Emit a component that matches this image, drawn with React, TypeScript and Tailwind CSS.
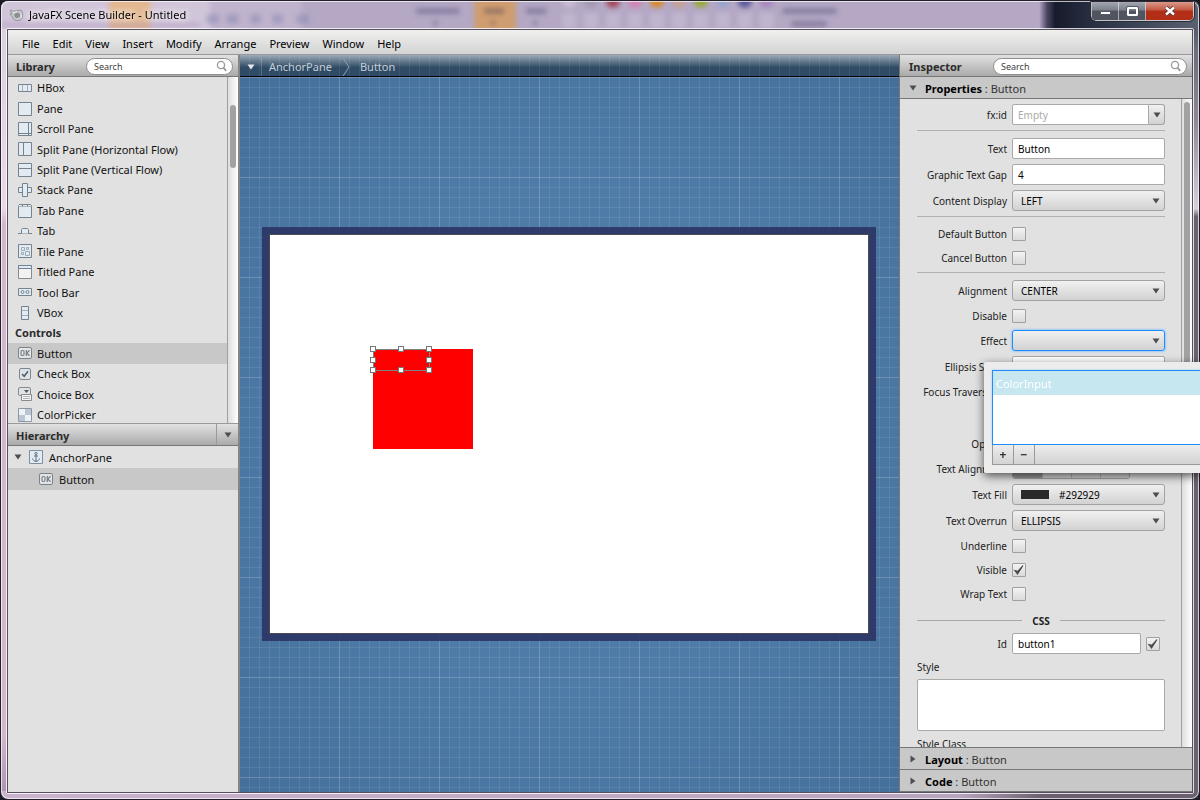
import { useId, type ReactNode } from "react";

/* ---------- small drawings ---------- */

const LINE = "#75838f";
const FILL = "#e3ebf2";

function Icon({ name }: { name: string }) {
  const s = { fill: FILL, stroke: LINE, strokeWidth: 1 };
  const shapes: Record<string, ReactNode> = {
    hbox: (
      <g {...s}>
        <path d="M.5 3.5h13v7H.5z" />
        <path d="M4.5 4v6M9.5 4v6" stroke="#a3b0bb" />
      </g>
    ),
    pane: <path d="M.5.5h13v13H.5z" {...s} />,
    scroll: (
      <g {...s}>
        <path d="M.5.5h13v13H.5z" />
        <path d="M10.5 1v12M1 11.5h12" />
      </g>
    ),
    splitH: (
      <g {...s}>
        <path d="M.5.5h13v13H.5z" />
        <path d="M5.5 1v12" />
      </g>
    ),
    splitV: (
      <g {...s}>
        <path d="M.5.5h13v13H.5z" />
        <path d="M1 5.5h12" />
      </g>
    ),
    stack: (
      <g {...s}>
        <path d="M.5 4.500h13v5H.5z" />
        <path d="M4.500.5h5v13h-5z" />
      </g>
    ),
    tabPane: (
      <g {...s}>
        <path d="M.5 2.500h13v11H.5z" />
        <path d="M.5 2.500v-1l1-1h10.500l1.500 1v1M4.500 1v1.500M9.500 1v1.500" />
      </g>
    ),
    tab: (
      <g {...s}>
        <path d="M0 9.500h14" />
        <path d="M3.500 9.500v-4l1-1h5l1 1v4" />
      </g>
    ),
    tile: (
      <g {...s}>
        <path d="M.5.5h13v13H.5z" />
        <path d="M3.500 3.500h3v3h-3zM8.500 3.500h2v2h-2zM3.500 8.500h2v2h-2zM7.500 7.500h4v4h-4z" stroke="#9dabb7" />
      </g>
    ),
    titled: (
      <g>
        <path d="M.5.5h13v13H.5z" fill="#f2f2f2" stroke="#8a8a8a" />
        <path d="M.5.5h13v3H.5z" fill="#dfe9f2" stroke="#708396" />
      </g>
    ),
    toolbar: (
      <g {...s}>
        <path d="M.5 3.500h13v7H.5z" />
        <circle cx="4.500" cy="7" r="1.500" />
        <circle cx="9.500" cy="7" r="1.500" />
      </g>
    ),
    vbox: (
      <g {...s}>
        <path d="M3.500.5h7v13h-7z" />
        <path d="M4 4.500h6M4 9.500h6" stroke="#a3b0bb" />
      </g>
    ),
    button: (
      <g fill="none" stroke="#7c8288">
        <rect x=".5" y="1.500" width="13" height="11" rx="1.500" fill="#e2e5e8" />
        <rect x="3" y="4.500" width="3" height="5" rx="1.200" strokeWidth="1.200" />
        <path d="M8.300 4v6M11.500 4.200 8.800 7l2.700 2.800" strokeWidth="1.300" />
      </g>
    ),
    check: (
      <g fill="none">
        <rect x="1.500" y="1.500" width="11" height="11" rx="1.500" fill="#dde3e8" stroke="#7c8890" />
        <path d="m4 7 2.200 2.300L10 4.200" stroke="#555d64" strokeWidth="1.500" />
      </g>
    ),
    choice: (
      <g>
        <rect x=".5" y=".5" width="12" height="8" rx="1.500" fill="#dfe3e6" stroke="#858b91" />
        <path d="M6 3h5L8.500 6z" fill="#555" />
        <path d="M3.500 7.500h10v6h-10z" fill="#f4f4f4" stroke="#858b91" />
        <path d="M5 9.500h7M5 11.500h7" stroke="#b0b4b8" />
      </g>
    ),
    picker: (
      <g>
        <path d="M.5.5h13v13H.5z" fill="#edf2f6" stroke="#8b98a4" />
        <path d="M7 1h6v6H7zM1 7h6v6H1z" fill="#b9c6d1" />
      </g>
    ),
    anchor: (
      <g>
        <path d="M.5.5h13v13H.5z" fill="#e3ebf2" stroke="#7f90a0" />
        <path d="M7 4.500v7M5 6h4M3.500 8.500c.5 2 2 2.800 3.500 2.800s3-.8 3.500-2.800" fill="none" stroke="#5c7082" />
        <circle cx="7" cy="3.500" r="1.100" fill="none" stroke="#5c7082" />
      </g>
    ),
  };
  return (
    <svg viewBox="0 0 14 14" className="size-[14px] shrink-0" aria-hidden="true">
      {shapes[name]}
    </svg>
  );
}

function Triangle({ dir = "down", light = false }: { dir?: "down" | "right"; light?: boolean }) {
  return (
    <svg viewBox="0 0 8 8" className={light ? "size-2 text-[#e6ebef]" : "size-2 text-[#4d4d4d]"} aria-hidden="true">
      <path d={dir === "down" ? "M.5 1.500h7L4 6.500z" : "M1.500.5v7L6.500 4z"} fill="currentColor" />
    </svg>
  );
}

/* Blurred desktop content showing through the translucent title bar. */
function GlassBackdrop() {
  const blobs = ["#c9bbd0", "#a39ab0", "#a4475a", "#d583b5", "#d98a2b", "#c7a293", "#98a83a", "#97a4cc", "#5b5a99", "#a987bd"];
  return (
    <svg className="absolute inset-x-0 top-0 h-7 w-full" viewBox="0 0 1200 28" preserveAspectRatio="none" aria-hidden="true">
      <defs>
        <filter id="soft" x="-20%" y="-50%" width="140%" height="200%">
          <feGaussianBlur stdDeviation="2.500" />
        </filter>
        <linearGradient id="dark" x1="0" x2="1">
          <stop offset="0" stopColor="#b3a5c4" />
          <stop offset=".05" stopColor="#484460" />
          <stop offset=".1" stopColor="#171b2c" />
          <stop offset=".45" stopColor="#303a4c" />
          <stop offset="1" stopColor="#596172" />
        </linearGradient>
      </defs>
      <rect width="1200" height="28" fill="#b4a8c5" />
      <g filter="url(#soft)">
        <rect x="-20" y="-10" width="230" height="50" fill="#d0c5d9" />
        <rect x="210" y="-10" width="90" height="50" fill="#bfb3cd" />
        <rect x="108" y="-4" width="42" height="36" fill="#e2b891" />
        <path d="M0 24h200" stroke="#a78fb8" strokeWidth="4" opacity=".5" />
        <path d="M416 10h43M484 10h20M526 10h20M783 10h54M792 23h35" stroke="#5f577c" strokeWidth="6" opacity=".5" />
        <path d="M435 19v6M535 19v6" stroke="#5f577c" strokeWidth="3" opacity=".6" />
        <path d="M206 18h12M226 18h12M250 18h10M272 18h10M296 18h12" stroke="#7a7fab" strokeWidth="9" opacity=".45" />
      </g>
      <g filter="url(#soft)">
        <rect x="474" y="-4" width="42" height="36" fill="#cf9d70" />
        <path d="M484 10h20" stroke="#5f4c5c" strokeWidth="6" opacity=".5" />
        <path d="M493 19v6" stroke="#5f4c5c" strokeWidth="3" opacity=".6" />
      </g>
      {blobs.map((c, i) => (
        <g key={i} filter="url(#soft)">
          <circle cx={569 + i * 22} cy="0" r="7" fill={c} />
          <rect x={562 + i * 22} y="12" width="14" height="15" fill="#c6bcd4" opacity=".7" />
        </g>
      ))}
      <rect x="1040" y="0" width="160" height="28" fill="url(#dark)" />
    </svg>
  );
}

/* ---------- form parts ---------- */

const fieldBase =
  "h-[21px] min-w-0 rounded-xs border border-[#a9a9a9] bg-white px-[5px] text-[10px] text-black outline-none placeholder:text-[#a9a9a9]";

const fieldRow = "h-[21px] mb-[5px]";
const checkRow = "h-5 mb-1";

function Row({ label, children, className = fieldRow, labelClass = "pt-0.5" }: { label: string; children: (id: string) => ReactNode; className?: string; labelClass?: string }) {
  const id = useId();
  return (
    <div className={`flex shrink-0 items-center gap-[5px] ${className}`}>
      <label htmlFor={id} className={`w-[90px] shrink-0 whitespace-nowrap text-right ${labelClass}`}>
        {label}
      </label>
      {children(id)}
    </div>
  );
}

function TextRow({ label, value }: { label: string; value: string }) {
  return <Row label={label}>{(id) => <input id={id} type="text" defaultValue={value} className={`${fieldBase} flex-1`} />}</Row>;
}

function SelectRow({ label, value, focused, swatch }: { label: string; value: string; focused?: boolean; swatch?: boolean }) {
  return (
    <Row label={label}>
      {(id) => (
        <div className="relative flex min-w-0 flex-1">
          <select
            id={id}
            defaultValue={value}
            className={`h-[21px] w-full appearance-none rounded-[3px] border bg-linear-to-b from-[#f1f1f1] to-[#d2d2d2] pt-0.5 text-[10px] text-black outline-none ${
              swatch ? "pl-[46px]" : "pl-2"
            } ${focused ? "border-[#1e8bff] shadow-[0_0_2px_1px_#9fcbf5]" : "border-[#a3a3a3]"}`}
          >
            <option value={value}>{value}</option>
          </select>
          {swatch && <span className="pointer-events-none absolute top-1.5 left-[9px] h-[9px] w-7 bg-[#292929]" />}
          <span className="pointer-events-none absolute inset-y-0 right-[5px] flex items-center">
            <Triangle />
          </span>
        </div>
      )}
    </Row>
  );
}

function Check({ id, checked, label }: { id?: string; checked?: boolean; label?: string }) {
  return (
    <span className="relative flex size-[14px] shrink-0">
      <input
        id={id}
        type="checkbox"
        aria-label={label}
        defaultChecked={checked}
        className="peer size-[14px] appearance-none rounded-[1px] border border-[#a0a0a0] bg-linear-to-b from-[#f3f3f3] to-[#dadada]"
      />
      <svg viewBox="0 0 14 14" className="pointer-events-none absolute inset-0 hidden size-[14px] peer-checked:block" aria-hidden="true">
        <path d="M2.800 7.500 5.500 11 11 2.500 6 8.200z" fill="#4a4a4a" stroke="#4a4a4a" strokeWidth="1.100" />
      </svg>
    </span>
  );
}

function CheckRow({ label, checked }: { label: string; checked?: boolean }) {
  return (
    <Row label={label} className={checkRow} labelClass="">
      {(id) => <Check id={id} checked={checked} />}
    </Row>
  );
}

function Separator() {
  return <hr className="mb-[7px] h-px shrink-0 border-0 bg-[#b0b0b0]" />;
}

function SearchBox({ className }: { className: string }) {
  return (
    <div className={`relative flex h-[17px] items-center font-normal ${className}`}>
      <input
        type="search"
        aria-label="Search"
        placeholder="Search"
        className="h-[17px] w-full appearance-none rounded-full border border-[#8e8e8e] bg-white pr-5 pl-[7px] text-[9px] outline-none placeholder:text-[#404040]"
      />
      <svg viewBox="0 0 12 12" className="pointer-events-none absolute right-[5px] size-3" fill="none" stroke="#999" aria-hidden="true">
        <circle cx="5" cy="5" r="3.600" strokeWidth="1.300" />
        <path d="m7.600 7.800 2.600 3" strokeWidth="1.800" />
      </svg>
    </div>
  );
}

const panelHeader =
  "flex h-[22px] shrink-0 items-center border-b border-[#777] bg-linear-to-b from-[#e2e2e2] to-[#aaaaaa] pt-px text-[11px] font-bold text-[#2b2b2b]";

/* ---------- left side ---------- */

const library: { icon?: string; name: string; selected?: boolean }[] = [
  { icon: "hbox", name: "HBox" },
  { icon: "pane", name: "Pane" },
  { icon: "scroll", name: "Scroll Pane" },
  { icon: "splitH", name: "Split Pane (Horizontal Flow)" },
  { icon: "splitV", name: "Split Pane (Vertical Flow)" },
  { icon: "stack", name: "Stack Pane" },
  { icon: "tabPane", name: "Tab Pane" },
  { icon: "tab", name: "Tab" },
  { icon: "tile", name: "Tile Pane" },
  { icon: "titled", name: "Titled Pane" },
  { icon: "toolbar", name: "Tool Bar" },
  { icon: "vbox", name: "VBox" },
  { name: "Controls" },
  { icon: "button", name: "Button", selected: true },
  { icon: "check", name: "Check Box" },
  { icon: "choice", name: "Choice Box" },
  { icon: "picker", name: "ColorPicker" },
];

function LeftSide() {
  return (
    <aside className="flex w-[232px] shrink-0 flex-col border-r-2 border-[#858585] bg-[#e1e1e1] text-[11px] text-[#111]">
      <div className={`${panelHeader} pl-2`}>
        <h2 className="w-[70px] pt-0.5">Library</h2>
        <SearchBox className="mr-[5px] flex-1" />
      </div>
      <div className="flex h-[346px] shrink-0 overflow-hidden">
        <ul className="mt-px flex h-[347px] min-w-0 flex-1 flex-col">
          {library.map((item) => (
            <li key={item.name} className={`flex flex-1 items-center ${item.selected ? "bg-[#c8c8c8]" : ""}`}>
              {item.icon ? (
                <button type="button" className="flex w-full items-center gap-[5px] whitespace-nowrap pl-[10px]">
                  <Icon name={item.icon} />
                  <span className="pt-px">{item.name}</span>
                </button>
              ) : (
                <h3 className="pt-px pl-[7px] font-bold text-[#2b2b2b]">{item.name}</h3>
              )}
            </li>
          ))}
        </ul>
        <div className="flex w-[11px] justify-center border-l border-[#a0a0a0] bg-linear-to-r from-[#dedede] to-white pt-7">
          <span className="h-[63px] w-1.5 rounded-full bg-[#a2a2a2]" />
        </div>
      </div>
      <div className="flex h-[23px] shrink-0 border-t border-b border-t-[#999] border-b-[#777] bg-linear-to-b from-[#e2e2e2] to-[#aaaaaa]">
        <h2 className="flex flex-1 items-center pt-1 pl-2 font-bold text-[#2b2b2b]">Hierarchy</h2>
        <button type="button" aria-label="Hierarchy options" className="flex w-[22px] items-center justify-center border-l border-[#999]">
          <Triangle />
        </button>
      </div>
      <ul>
        <li>
          <button type="button" className="flex h-[22px] w-full items-center pl-[6px]">
            <Triangle />
            <span className="ml-[7px] flex items-center gap-[6px]">
              <Icon name="anchor" />
              <span className="pt-0.5">AnchorPane</span>
            </span>
          </button>
        </li>
        <li>
          <button type="button" className="flex h-[22px] w-full items-center gap-[6px] bg-[#c8c8c8] pl-[31px]">
            <Icon name="button" />
            <span className="pt-0.5">Button</span>
          </button>
        </li>
      </ul>
    </aside>
  );
}

/* ---------- canvas ---------- */

const handles = [
  { x: 0, y: 0 },
  { x: 28, y: 0 },
  { x: 56, y: 0 },
  { x: 0, y: 11 },
  { x: 56, y: 11 },
  { x: 0, y: 21 },
  { x: 28, y: 21 },
  { x: 56, y: 21 },
];

function Canvas() {
  return (
    <main className="flex min-w-0 flex-1 flex-col">
      <nav className="flex h-[22px] shrink-0 items-center border-b border-black pt-0.5 text-[11px] text-[#c5ced6] [background:linear-gradient(to_left,#ffffff12_1px,transparent_1px)_0_0/10px_100%,linear-gradient(to_bottom,#9cabb8_0,#5b7185_35%,#2f4b66_60%,#2e4a64_100%)]">
        <button type="button" aria-label="Document menu" className="flex h-[18px] w-[22px] items-center justify-center border-r border-white/20">
          <Triangle light />
        </button>
        <a href="#anchorpane" className="pt-0.5 pl-[7px]">
          AnchorPane
        </a>
        <svg viewBox="0 0 8 20" className="mx-[10px] h-5 w-2" fill="none" stroke="#8fa1b1" aria-hidden="true">
          <path d="M1 1l6 9-6 9" />
        </svg>
        <a href="#button" className="pt-0.5">
          Button
        </a>
      </nav>
      <div className="flex flex-1 items-center justify-center overflow-hidden pr-px pb-px [background:linear-gradient(to_left,#ffffff1f_1px,transparent_1px)_0_0/100px_100px,linear-gradient(to_bottom,#ffffff1f_1px,transparent_1px)_0_0/100px_100px,linear-gradient(to_left,#ffffff14_1px,transparent_1px)_0_0/10px_10px,linear-gradient(to_bottom,#ffffff14_1px,transparent_1px)_0_0/10px_10px,radial-gradient(ellipse_at_center,#4e7ba8_50%,#456f9b_100%)]">
        <div className="bg-[#2b3464e6] p-[7px]">
          <div className="relative h-[400px] w-[600px] border border-[#4c4c50] bg-white">
            <div className="absolute top-[114px] left-[103px] size-[100px] bg-[#ff0000]">
              <div className="absolute top-0 left-0 h-[22px] w-[57px] border border-[#808080]" />
              {handles.map((h) => (
                <span
                  key={`${h.x}-${h.y}`}
                  className="absolute -mt-[3px] -ml-[3px] size-1.5 border border-[#777] bg-white"
                  style={{ left: h.x, top: h.y }}
                />
              ))}
            </div>
          </div>
        </div>
      </div>
    </main>
  );
}

/* ---------- inspector ---------- */

function SectionTitle({ name, open, className }: { name: string; open?: boolean; className: string }) {
  return (
    <button
      type="button"
      aria-expanded={!!open}
      className={`flex h-[22px] shrink-0 items-center border-[#777] bg-[#c8c8c8] pl-[9px] text-[11px] text-[#333] ${className}`}
    >
      <Triangle dir={open ? "down" : "right"} />
      <span className="ml-2 pt-1">
        <b className="text-black">{name}</b> : Button
      </span>
    </button>
  );
}

function Inspector() {
  return (
    <aside className="flex w-[293px] shrink-0 flex-col border-l border-[#777] bg-[#e1e1e1]">
      <div className={`${panelHeader} pl-[9px]`}>
        <h2 className="w-[84px] pt-0.5">Inspector</h2>
        <SearchBox className="mr-[5px] flex-1" />
      </div>
      <SectionTitle name="Properties" open className="border-b" />
      <div className="flex min-h-0 flex-1">
        <div className="flex min-h-0 flex-1 flex-col overflow-hidden pt-[5px] pr-4 pl-[17px] text-[10px] text-[#222]">
          <Row label="fx:id">
            {(id) => (
              <span className="flex min-w-0 flex-1">
                <input id={id} type="text" placeholder="Empty" className={`${fieldBase} flex-1 rounded-r-none`} />
                <button
                  type="button"
                  aria-label="Choose fx:id"
                  className="flex h-[21px] w-4 items-center justify-center rounded-r-[3px] border border-l-0 border-[#a3a3a3] bg-linear-to-b from-[#f1f1f1] to-[#d2d2d2]"
                >
                  <Triangle />
                </button>
              </span>
            )}
          </Row>
          <Separator />
          <TextRow label="Text" value="Button" />
          <TextRow label="Graphic Text Gap" value="4" />
          <SelectRow label="Content Display" value="LEFT" />
          <Separator />
          <CheckRow label="Default Button" />
          <CheckRow label="Cancel Button" />
          <Separator />
          <SelectRow label="Alignment" value="CENTER" />
          <CheckRow label="Disable" />
          <SelectRow label="Effect" value="" focused />
          <TextRow label="Ellipsis String" value="..." />
          <CheckRow label="Focus Traversable" />
          <div className="h-[27px] shrink-0" />
          <TextRow label="Opacity" value="1" />
          <Row label="Text Alignment" className="mb-[5px] h-5" labelClass="">
            {(id) => (
              <span className="flex h-5 overflow-hidden rounded-[3px] border border-[#a3a3a3]">
                <button id={id} type="button" aria-label="Left" className="w-[29px] bg-[#9a9a9a]" />
                <button type="button" aria-label="Center" className="w-[29px] border-l border-[#b5b5b5] bg-[#d8d8d8]" />
                <button type="button" aria-label="Right" className="w-[29px] border-l border-[#b5b5b5] bg-[#d8d8d8]" />
                <button type="button" aria-label="Justify" className="w-[29px] border-l border-[#b5b5b5] bg-[#d8d8d8]" />
              </span>
            )}
          </Row>
          <SelectRow label="Text Fill" value="#292929" swatch />
          <SelectRow label="Text Overrun" value="ELLIPSIS" />
          <CheckRow label="Underline" />
          <CheckRow label="Visible" checked />
          <CheckRow label="Wrap Text" />
          <div className="flex h-[25px] shrink-0 items-center gap-[10px] font-bold">
            <span className="h-px flex-1 bg-[#a8a8a8]" />
            <h3 className="pt-0.5">CSS</h3>
            <span className="h-px flex-1 bg-[#a8a8a8]" />
          </div>
          <Row label="Id">
            {(id) => (
              <>
                <input id={id} type="text" defaultValue="button1" className={`${fieldBase} flex-1`} />
                <span className="mr-[5px]">
                  <Check checked label="Id is set" />
                </span>
              </>
            )}
          </Row>
          <label htmlFor="style" className="mb-1 h-4 shrink-0 leading-4">
            Style
          </label>
          <textarea id="style" className="mb-[5px] h-[52px] shrink-0 resize-none rounded-xs border border-[#a9a9a9] bg-white outline-none" />
          <span className="h-4 shrink-0 leading-4">Style Class</span>
        </div>
        <div className="flex w-[11px] justify-center border-l border-[#a0a0a0] bg-linear-to-r from-[#dedede] to-white pt-[3px]">
          <span className="h-[368px] w-1.5 rounded-full bg-[#a2a2a2]" />
        </div>
      </div>
      <SectionTitle name="Layout" className="border-t" />
      <SectionTitle name="Code" className="mb-px border-t shadow-[0_1px_0_#777]" />
    </aside>
  );
}

function EffectPopup() {
  const tool = "flex w-[21px] items-center justify-center border-r border-[#999] text-xs font-bold leading-none text-[#333]";
  return (
    <div className="absolute top-[362px] right-0 w-[216px] rounded-l-xs bg-[#ececec] py-2 pl-2 shadow-[0_3px_10px_rgba(0,0,0,.65)]">
      <div className="h-[75px] border border-r-0 border-[#1e8bff] bg-white shadow-[0_0_2px_#9fcbf5]">
        <button type="button" className="flex h-6 w-full items-center bg-[#c6e7ef] pt-0.5 pl-[3px] text-[11px] text-white">
          ColorInput
        </button>
      </div>
      <div className="flex h-5 border border-t-0 border-r-0 border-[#999] bg-linear-to-b from-[#ededed] to-[#d3d3d3]">
        <button type="button" aria-label="Add effect" className={tool}>
          +
        </button>
        <button type="button" aria-label="Remove effect" className={tool}>
          −
        </button>
      </div>
    </div>
  );
}

/* ---------- window ---------- */

function TitleBar() {
  const btn = "flex items-center justify-center border-white/50 bg-linear-to-b from-[#a5a8b0] via-[#7b7f8a] via-45% to-[#50545f] to-50%";
  return (
    <header className="relative flex h-[26px] shrink-0 items-center pl-[3px]">
      <svg viewBox="0 0 16 16" className="size-4" aria-hidden="true">
        <path d="M1.500 3c1.500.2 2 1.500 3.500 1.200C7 3.800 8.500 3 10 3.500c1.200-.8 2.500-.5 2.500.5 1.200 1.500 1.500 4 .8 6.500-.8 2.500-3.300 3.500-5.800 3-2.500-.4-4-2-4.300-4.200C2.500 8.300 1.200 8 1 7l2-.5C2.300 5.500 1.500 4.500 1.500 3z" fill="#c6c7ca" stroke="#85878c" strokeWidth=".8" />
        <path d="M5.500 7c1.500-1.800 5-1.500 5.500.5s-1 3.500-3 3.500-3.300-2.300-2.500-4z" fill="#8d8f94" />
        <path d="M4 5.500c1.500.3 2.500-.5 4-.8M12 6.500c.6 1.500.6 3 0 4.500" stroke="#f3f3f3" fill="none" />
      </svg>
      <h1 className="ml-1 text-[11px] text-black [text-shadow:0_0_6px_#fff,0_0_8px_#fff]">JavaFX Scene Builder - Untitled</h1>
      <div className="ml-auto flex h-[19px] self-start overflow-hidden rounded-b-[5px] border border-t-0 border-white/70 outline outline-[#2a2c35]">
        <button type="button" aria-label="Minimize" className={`${btn} w-[27px] border-r`}>
          <span className="mt-1 h-1 w-[11px] rounded-[1px] border border-[#555a66] bg-white" />
        </button>
        <button type="button" aria-label="Maximize" className={`${btn} w-[27px] border-r`}>
          <span className="h-[9px] w-[11px] rounded-[1px] border-2 border-white outline outline-[#555a66]" />
        </button>
        <button
          type="button"
          aria-label="Close"
          className="flex w-[47px] items-center justify-center bg-linear-to-b from-[#d99a8c] via-[#c4553f] via-45% to-[#b22e17] to-50%"
        >
          <svg viewBox="0 0 12 10" className="h-[10px] w-3" aria-hidden="true">
            <path d="M2 1.500l8 7M10 1.500l-8 7" stroke="#54363c" strokeWidth="4.200" />
            <path d="M2 1.500l8 7M10 1.500l-8 7" stroke="#fff" strokeWidth="2.400" />
          </svg>
        </button>
      </div>
    </header>
  );
}

const menus = ["File", "Edit", "View", "Insert", "Modify", "Arrange", "Preview", "Window", "Help"];

export default function App() {
  return (
    <div className="h-screen overflow-hidden bg-[#1a1a22] font-['Noto_Sans','Segoe_UI',sans-serif]">
      <div className="relative flex h-full flex-col overflow-hidden rounded-lg border border-[#221f2a] [background:linear-gradient(to_bottom,#3a4150_0,#6a6d7c_6%,#8f8796_15%,#d6d0da_26%,#6b606e_27%,#6b606e_100%)_right/8px_100%_no-repeat,linear-gradient(to_right,#c9b3cc_0,#b9a4bd_80%,#6b606e_87%)_bottom/100%_8px_no-repeat,linear-gradient(to_bottom,#d9cfe0_0,#ead8e6_26%,#d3b5cd_28%,#d3b5cd_92%,#a892ad_100%)]">
        <GlassBackdrop />
        <div className="relative flex min-h-0 flex-1 flex-col rounded-lg border border-white/70 px-1 pb-1">
          <TitleBar />
          <div className="flex min-h-0 flex-1 flex-col rounded-[2px] border border-white/80">
            <div className="flex min-h-0 flex-1 flex-col border border-[#564e5c] bg-[#e1e1e1]">
              <nav className="flex h-[25px] shrink-0 items-center gap-[13px] border-b border-[#999] bg-linear-to-b from-[#f0f0ef] to-[#d3d3d3] pt-1 pl-[14px] text-[11px] text-black">
                {menus.map((m) => (
                  <button key={m} type="button">
                    {m}
                  </button>
                ))}
              </nav>
              <div className="flex min-h-0 flex-1">
                <LeftSide />
                <Canvas />
                <Inspector />
              </div>
            </div>
          </div>
        </div>
      </div>
      <EffectPopup />
    </div>
  );
}
